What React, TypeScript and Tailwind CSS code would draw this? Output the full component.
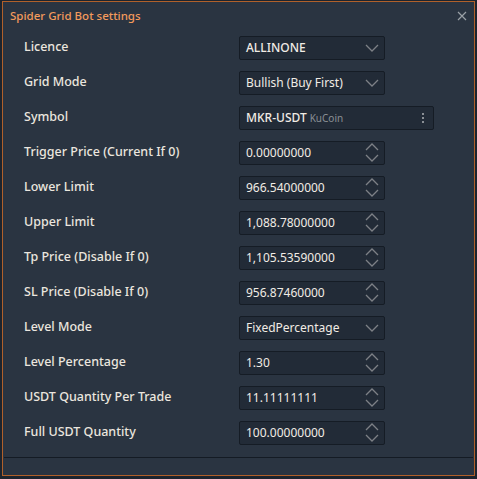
import React from 'react'

type Field = {
  label: string
  value: string
  kind: 'select' | 'number' | 'symbol'
}

const fields: Field[] = [
  { label: 'Licence', value: 'ALLINONE', kind: 'select' },
  { label: 'Grid Mode', value: 'Bullish (Buy First)', kind: 'select' },
  { label: 'Symbol', value: 'MKR-USDT', kind: 'symbol' },
  { label: 'Trigger Price (Current If 0)', value: '0.00000000', kind: 'number' },
  { label: 'Lower Limit', value: '966.54000000', kind: 'number' },
  { label: 'Upper Limit', value: '1,088.78000000', kind: 'number' },
  { label: 'Tp Price (Disable If 0)', value: '1,105.53590000', kind: 'number' },
  { label: 'SL Price (Disable If 0)', value: '956.87460000', kind: 'number' },
  { label: 'Level Mode', value: 'FixedPercentage', kind: 'select' },
  { label: 'Level Percentage', value: '1.30', kind: 'number' },
  { label: 'USDT Quantity Per Trade', value: '11.11111111', kind: 'number' },
  { label: 'Full USDT Quantity', value: '100.00000000', kind: 'number' },
]

function ChevronDown() {
  return (
    <svg width="14" height="8" viewBox="0 0 14 8" fill="none" stroke="#7d8186" strokeWidth="1.3">
      <path d="M1 1l6 6 6-6" />
    </svg>
  )
}

function Spinner() {
  return (
    <div className="flex flex-col items-center gap-[3px]">
      <svg width="14" height="8" viewBox="0 0 14 8" fill="none" stroke="#7d8186" strokeWidth="1.3">
        <path d="M1 7l6-6 6 6" />
      </svg>
      <svg width="14" height="8" viewBox="0 0 14 8" fill="none" stroke="#7d8186" strokeWidth="1.3">
        <path d="M1 1l6 6 6-6" />
      </svg>
    </div>
  )
}

function Row({ f }: { f: Field }) {
  return (
    <div className="flex items-center h-[35px]">
      <div className="w-[215px] text-[12.5px] font-medium text-[#ebe6df]">{f.label}</div>
      {f.kind === 'symbol' ? (
        <div className="w-[195px] h-[24px] flex items-center justify-between pl-[6px] pr-[9px] bg-[#222b37] border border-[#151c25] rounded-[2px]">
          <div className="flex items-baseline gap-[3px]">
            <span className="text-[12px] font-medium text-[#f1ece5]">{f.value}</span>
            <span className="text-[10px] text-[#8a8f95]">KuCoin</span>
          </div>
          <div className="flex flex-col gap-[2px]">
            <span className="w-[2px] h-[2px] bg-[#8a8f95]" />
            <span className="w-[2px] h-[2px] bg-[#8a8f95]" />
            <span className="w-[2px] h-[2px] bg-[#8a8f95]" />
          </div>
        </div>
      ) : (
        <div className="w-[146px] h-[24px] flex items-center justify-between pl-[6px] pr-[5px] bg-[#222b37] border border-[#151c25] rounded-[2px]">
          <span
            className={
              f.value === 'ALLINONE'
                ? 'text-[12px] font-medium text-[#f1ece5]'
                : 'text-[12px] text-[#f1ece5]'
            }
          >
            {f.value}
          </span>
          {f.kind === 'select' ? <ChevronDown /> : <Spinner />}
        </div>
      )}
    </div>
  )
}

export default function App() {
  return (
    <div
      className="w-[477px] h-[479px] bg-[#1d242e] pt-[1px] pl-[2px] overflow-hidden"
      style={{ fontFamily: '"Noto Sans", "Open Sans", sans-serif' }}
    >
      <div className="w-[473px] h-[475px] border border-[#b0602a] bg-[#2a3441] flex flex-col">
        <div className="h-[27px] flex items-center justify-between pl-[7px] pr-[7px]">
          <span className="text-[11.5px] font-medium text-[#f39a5c]">Spider Grid Bot settings</span>
          <svg width="10" height="10" viewBox="0 0 10 10" stroke="#9aa0a6" strokeWidth="1.2">
            <path d="M1 1l8 8M9 1l-8 8" />
          </svg>
        </div>
        <div className="pl-[21px] pt-[1px] flex flex-col">
          {fields.map((f) => (
            <Row key={f.label} f={f} />
          ))}
        </div>
        <div className="mt-[7px] mx-[1px] h-[1px] bg-[#141b24]" />
      </div>
    </div>
  )
}
